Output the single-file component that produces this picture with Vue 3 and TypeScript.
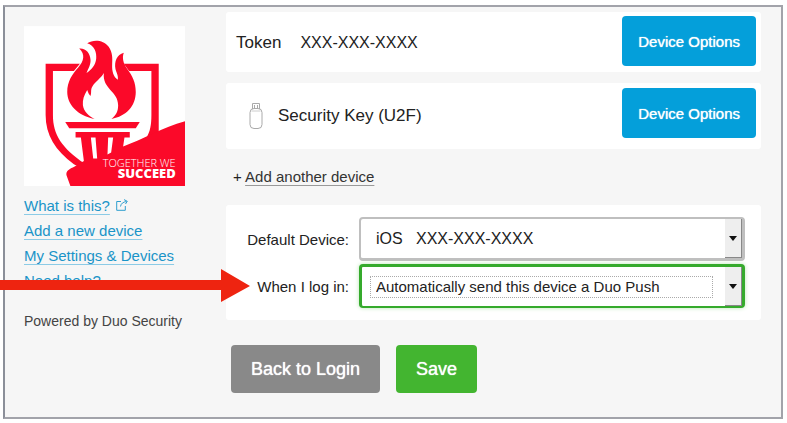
<script setup lang="ts">
import { ref } from 'vue'

interface Device {
  name: string
  number?: string
  key?: boolean
}

const devices: Device[] = [
  { name: 'Token', number: 'XXX-XXX-XXXX' },
  { name: 'Security Key (U2F)', key: true },
]

const defaultDevice = ref('ios')
const loginAction = ref('push')
</script>

<template>
  <div class="page">
    <div class="frame">
      <aside class="sidebar">
        <svg class="logo" viewBox="72 78 484 480" role="img" aria-label="Together we succeed">
          <rect x="72" y="78" width="484" height="482" fill="#fff" />
          <g fill="#fb0929">
            <path d="M137 191H240L222 213H159V345C159 405 186 444 254 491L246 506L222 493C166 452 137 405 137 345Z" />
            <path d="M372 191H477V396L441 412C451 395 455 375 455 345V213H388Z" />
            <path d="M284 357C232 347 202 313 202 276C202 244 217 222 235 202C252 183 257 163 238 145C258 143 271 159 272 179C273 194 265 206 260 219C275 209 287 195 289 176C291 156 284 136 262 129C281 117 311 119 326 139C339 157 338 176 337 193C336 214 341 230 354 239C356 226 350 219 347 207C343 184 351 164 372 158C366 174 371 191 382 206C398 228 408 247 408 276C408 318 379 349 335 357C349 346 355 334 355 316C355 273 307 268 312 219C303 235 286 245 278 259C271 270 276 277 272 288C267 284 265 278 262 270C252 286 248 300 249 315C251 334 267 349 284 357Z" />
            <path d="M196 366H420L408 385H208Z" />
            <path d="M227 396H390V413H374L370 440C429 418 489 383 556 364V560H212L200 527C196 513 211 507 223 501L252 483L243 413H227Z" />
          </g>
          <path d="M273 413H287L292 476H280ZM325 413H340L334 458L323 464Z" fill="#fff" />
          <text class="logo-top" x="528" y="501" text-anchor="end">TOGETHER WE</text>
          <text class="logo-bottom" x="528" y="535" text-anchor="end">SUCCEED</text>
        </svg>
        <nav class="links">
          <span>
            <a href="#what">What is this?</a>
            <svg class="external" viewBox="0 0 12 12" fill="none" stroke="#2f9fcf" aria-hidden="true">
              <path d="M5 2.5H.7V11.3H9.3V7M4.5 7.5C5 4.500 7 3 10.500 2.500M8 .6L11.300 2.300L9.500 5" />
            </svg>
          </span>
          <a href="#add">Add a new device</a>
          <a href="#settings">My Settings &amp; Devices</a>
          <a href="#help">Need help?</a>
        </nav>
        <p class="powered">Powered by Duo Security</p>
      </aside>

      <main class="main">
        <section v-for="d in devices" :key="d.name" class="card device" :class="{ 'is-key': d.key }">
          <svg v-if="d.key" class="usb" viewBox="0 0 14 28" fill="none" stroke="#aaa" aria-hidden="true">
            <path d="M3.500 7V1.500H10.500V7" />
            <path d="M5.500 3V6M8.500 3V6" />
            <rect x="1" y="6.500" width="12" height="20" rx="4" />
            <path d="M2.500 9H11.500" stroke="#ccc" />
          </svg>
          <span>{{ d.name }}</span>
          <span v-if="d.number" class="number">{{ d.number }}</span>
          <button type="button" class="btn blue">Device Options</button>
        </section>

        <p class="add">+ <a href="#another">Add another device</a></p>

        <form class="card settings" @submit.prevent>
          <label for="device">Default Device:</label>
          <div class="pick">
            <select id="device" v-model="defaultDevice">
              <option value="ios">iOS&nbsp;&nbsp; XXX-XXX-XXXX</option>
            </select>
            <span class="drop"></span>
          </div>
          <label for="action">When I log in:</label>
          <div class="pick active">
            <select id="action" v-model="loginAction">
              <option value="push">Automatically send this device a Duo Push</option>
            </select>
            <span class="drop"></span>
          </div>
        </form>

        <div class="actions">
          <button type="button" class="btn gray">Back to Login</button>
          <button type="button" class="btn green">Save</button>
        </div>
      </main>
    </div>
    <svg class="pointer" viewBox="0 0 250 34" aria-hidden="true">
      <path d="M0 11H221V0L250 17L221 33V21H0Z" fill="#ee2410" />
    </svg>
  </div>
</template>

<style>
body {
  background: #fff;
}
</style>

<style scoped>
.page {
  position: relative;
  padding: 5px 4px 4px 3px;
  font-family: "Liberation Sans", Arial, sans-serif;
  color: #222;
}
.frame {
  display: flex;
  gap: 40px;
  padding: 5px 20px 24px 19px;
  border: 2px solid #a2a3aa;
  border-left-color: #8b8f99;
  background: #f6f6f6;
}
.sidebar {
  flex: none;
  width: 162px;
  padding-top: 14px;
}
.logo {
  display: block;
  width: 161px;
  height: 160px;
}
.logo-top,
.logo-bottom {
  font-family: "Open Sans", sans-serif;
  fill: #fff;
}
.logo-top {
  font-size: 33px;
  font-weight: 300;
}
.logo-bottom {
  font-size: 39px;
  font-weight: 800;
}
.links {
  display: flex;
  flex-direction: column;
  align-items: flex-start;
  gap: 7px;
  margin-top: 11px;
  font-size: 15px;
  line-height: 18px;
  white-space: nowrap;
}
.links a {
  color: #1a94c8;
  text-decoration-color: #8ccbe6;
  text-decoration-thickness: 1px;
  text-underline-offset: 3px;
}
.external {
  width: 12px;
  height: 12px;
  margin-left: 6px;
}
.powered {
  margin: 22px 0 0;
  font-size: 14px;
  line-height: 18px;
  color: #444;
  white-space: nowrap;
}
.main {
  flex: 1;
  min-width: 0;
}
.card {
  border-radius: 3px;
  background: #fff;
}
.device {
  display: flex;
  align-items: flex-start;
  padding: 4px 5px 2px 10px;
  font-size: 17px;
  line-height: 54px;
}
.device.is-key {
  margin-top: 11px;
  padding: 5px 5px 5px 23px;
  line-height: 56px;
}
.device .number {
  margin-left: 19px;
  font-size: 16px;
}
.usb {
  width: 14px;
  height: 28px;
  margin: 14px 15px 0 0;
}
.btn {
  height: 48px;
  padding: 0 20px;
  border: 0;
  border-radius: 4px;
  font-family: inherit;
  font-size: 18px;
  color: #fff;
  text-shadow: 0 0 1px #fff;
}
.blue {
  height: 50px;
  padding: 0 16px;
  margin-left: auto;
  font-size: 15px;
  background: #049fda;
}
.gray {
  background: #898989;
}
.green {
  background: #43b530;
}
.add {
  margin: 19px 0 0 7px;
  font-size: 15px;
  line-height: 18px;
}
.add a {
  color: #333;
  text-decoration-color: #999;
  text-decoration-thickness: 1px;
  text-underline-offset: 3px;
}
.settings {
  display: grid;
  grid-template-columns: 123px 1fr;
  align-items: center;
  gap: 3px 10px;
  margin-top: 19px;
  padding: 12px 16px 12px 0;
}
.settings label {
  text-align: right;
  font-size: 15px;
}
.pick {
  position: relative;
  display: flex;
  align-items: center;
  height: 39px;
  padding: 0 29px 0 9px;
  border: 3px solid #bfbfbf;
  border-width: 2px 3px 3px 2px;
  border-radius: 4px;
  background: #fff;
}
.pick.active {
  border: 3px solid #35aa2c;
  border-width: 3px 3px 2px 3px;
  padding-left: 8px;
  box-shadow: 0 0 4px #b9e6b4;
}
.pick select {
  width: 100%;
  height: 22px;
  padding: 0 5px;
  border: 1px solid transparent;
  outline: 0;
  appearance: none;
  background: transparent;
  font-family: inherit;
  font-size: 16px;
  color: #222;
}
.pick.active select {
  border: 1px dotted #aaa;
  font-size: 15px;
}
.drop {
  position: absolute;
  top: 0;
  right: 0;
  bottom: 0;
  display: grid;
  place-items: center;
  width: 16px;
  border-right: 1px solid #888;
  border-bottom: 1px solid #888;
  background: #eee;
  pointer-events: none;
}
.drop::before {
  content: "";
  border: 4px solid transparent;
  border-top: 5px solid #111;
  border-bottom: 0;
}
.actions {
  display: flex;
  gap: 16px;
  margin: 25px 0 0 5px;
}
.pointer {
  position: absolute;
  top: 269px;
  left: 0;
  width: 250px;
  height: 34px;
}
</style>
